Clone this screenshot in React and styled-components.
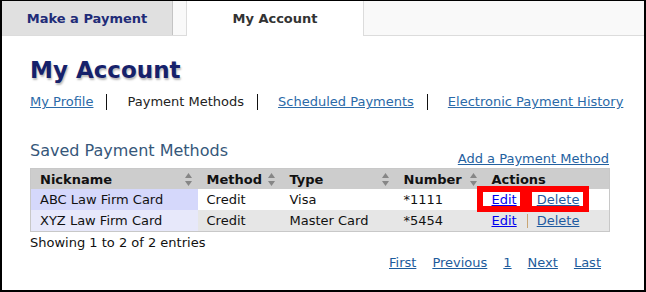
import React from 'react';
import styled, { createGlobalStyle } from 'styled-components';

const GlobalStyle = createGlobalStyle`
  body {
    margin: 0;
    font-family: "DejaVu Sans", Verdana, sans-serif;
    background: #fff;
  }
`;

const COLUMNS = [
  { key: 'nickname', label: 'Nickname', width: 167, sortable: true },
  { key: 'method', label: 'Method', width: 83, sortable: true },
  { key: 'type', label: 'Type', width: 114, sortable: true },
  { key: 'number', label: 'Number', width: 88, sortable: true },
  { key: 'actions', label: 'Actions', width: 127, sortable: false },
];

const ROWS = [
  { nickname: 'ABC Law Firm Card', method: 'Credit', type: 'Visa', number: '*1111', boxed: true },
  { nickname: 'XYZ Law Firm Card', method: 'Credit', type: 'Master Card', number: '*5454', boxed: false },
];

function SortIcon() {
  return (
    <svg width="7" height="13" viewBox="0 0 7 13">
      <path d="M3.5 0 L7 5 L0 5 Z" fill="#868686" />
      <path d="M0 8 L7 8 L3.5 13 Z" fill="#868686" />
    </svg>
  );
}

export default function App() {
  return (
    <>
      <GlobalStyle />
      <Frame>
        <TabBar>
          <Tab>Make a Payment</Tab>
          <Tab $active>My Account</Tab>
        </TabBar>
        <Content>
          <Title>My Account</Title>
          <SubNav>
            <SubNavItem><SubLink href="#">My Profile</SubLink></SubNavItem>
            <SubNavItem $sep>Payment Methods</SubNavItem>
            <SubNavItem $sep><SubLink href="#">Scheduled Payments</SubLink></SubNavItem>
            <SubNavItem $sep><SubLink href="#">Electronic Payment History</SubLink></SubNavItem>
          </SubNav>
          <Section>
            <SectionHead>
              <SectionTitle>Saved Payment Methods</SectionTitle>
              <AddLink href="#">Add a Payment Method</AddLink>
            </SectionHead>
            <Table>
              <colgroup>
                {COLUMNS.map((c) => (
                  <col key={c.key} style={{ width: c.width }} />
                ))}
              </colgroup>
              <thead>
                <tr>
                  {COLUMNS.map((c) => (
                    <Th key={c.key}>
                      <ThInner>
                        <span>{c.label}</span>
                        {c.sortable && <SortIcon />}
                      </ThInner>
                    </Th>
                  ))}
                </tr>
              </thead>
              <tbody>
                {ROWS.map((r, i) => (
                  <tr key={r.number}>
                    <Td $sorted $odd={i % 2 === 0}>{r.nickname}</Td>
                    <Td $odd={i % 2 === 0}>{r.method}</Td>
                    <Td $odd={i % 2 === 0}>{r.type}</Td>
                    <Td $odd={i % 2 === 0}>{r.number}</Td>
                    <Td $odd={i % 2 === 0}>
                      <Actions>
                        <Action $boxed={r.boxed} $edge="edit">
                          <EditLink href="#">Edit</EditLink>
                        </Action>
                        {!r.boxed && <Divider />}
                        <Action $boxed={r.boxed} $edge="delete" $gap={r.boxed ? 20 : 0}>
                          <DeleteLink href="#">Delete</DeleteLink>
                        </Action>
                      </Actions>
                    </Td>
                  </tr>
                ))}
              </tbody>
            </Table>
            <Info>Showing 1 to 2 of 2 entries</Info>
            <Pager>
              <PageLink href="#">First</PageLink>
              <PageLink href="#">Previous</PageLink>
              <PageLink href="#">1</PageLink>
              <PageLink href="#">Next</PageLink>
              <PageLink href="#">Last</PageLink>
            </Pager>
          </Section>
        </Content>
      </Frame>
    </>
  );
}

const Frame = styled.div`
  width: 646px;
  height: 292px;
  box-sizing: border-box;
  border: 2px solid #000;
  border-top-width: 1px;
  background: #fff;
  overflow: hidden;
`;

const TabBar = styled.div`
  display: flex;
  height: 34px;
  background: #f9f9f9;
  border-bottom: 1px solid #dcdcdc;
`;

const Tab = styled.div`
  display: flex;
  align-items: center;
  justify-content: center;
  font-size: 13px;
  font-weight: bold;
  ${(p) =>
    p.$active
      ? `
    width: 176px;
    height: 35px;
    margin-left: 13px;
    background: #fff;
    color: #333;
    border-left: 1px solid #dcdcdc;
    border-right: 1px solid #dcdcdc;
  `
      : `
    width: 170px;
    background: #e0e0e0;
    color: #1f2c78;
    border-right: 1px solid #c4c4c4;
  `}
`;

const Content = styled.div`
  padding-left: 28px;
`;

const Title = styled.h1`
  margin: 20px 0 0;
  font-size: 23px;
  line-height: 28px;
  font-weight: bold;
  color: #16216b;
  text-shadow: 1px 2px 2px rgba(0, 0, 0, 0.28);
`;

const SubNav = styled.ul`
  display: flex;
  margin: 10px 0 0;
  padding: 0;
  list-style: none;
  font-size: 13px;
  line-height: 16px;
  color: #222;
  white-space: nowrap;
`;

const SubNavItem = styled.li`
  ${(p) =>
    p.$sep &&
    `
    margin-left: 13px;
    padding-left: 20px;
    border-left: 1px solid #111;
  `}
`;

const SubLink = styled.a`
  color: #2b6aa8;
  text-decoration: underline;
`;

const Section = styled.div`
  width: 579px;
`;

const SectionHead = styled.div`
  display: flex;
  justify-content: space-between;
  align-items: flex-end;
  margin-top: 31px;
`;

const SectionTitle = styled.h2`
  margin: 0 0 7px;
  font-size: 16px;
  line-height: 20px;
  font-weight: normal;
  color: #36577a;
`;

const AddLink = styled.a`
  margin-bottom: 1px;
  font-size: 13px;
  line-height: 16px;
  color: #2461a0;
  text-decoration: underline;
`;

const Table = styled.table`
  width: 579px;
  border-collapse: collapse;
  table-layout: fixed;
  border: 1px solid #c8c8c8;
  font-size: 13px;
`;

const Th = styled.th`
  height: 20px;
  padding: 0 6px 0 9px;
  background: #cdcdcd;
  color: #111;
  text-align: left;
  font-weight: bold;
`;

const ThInner = styled.div`
  display: flex;
  align-items: center;
  justify-content: space-between;
`;

const Td = styled.td`
  height: 21px;
  padding: 0 9px;
  color: #111;
  white-space: nowrap;
  background: ${(p) =>
    p.$sorted ? (p.$odd ? '#d5d8fb' : '#e7e8fa') : p.$odd ? '#fff' : '#e6e6e6'};
`;

const Actions = styled.div`
  display: flex;
  align-items: center;
`;

const Action = styled.span`
  position: relative;
  display: inline-block;
  line-height: 16px;
  margin-left: ${(p) => p.$gap || 0}px;
  &::after {
    content: '';
    display: ${(p) => (p.$boxed ? 'block' : 'none')};
    position: absolute;
    top: -6px;
    bottom: -4px;
    left: ${(p) => (p.$edge === 'edit' ? '-15px' : '-11px')};
    right: ${(p) => (p.$edge === 'edit' ? '-9px' : '-10px')};
    border: 6px solid #ff0000;
    pointer-events: none;
  }
`;

const Divider = styled.span`
  width: 1px;
  height: 14px;
  margin: 0 9px 0 10px;
  background: #c9a574;
`;

const EditLink = styled.a`
  color: #0000ee;
  text-decoration: underline;
`;

const DeleteLink = styled.a`
  color: #1f5aa0;
  text-decoration: underline;
`;

const Info = styled.div`
  margin-top: 3px;
  font-size: 13px;
  line-height: 16px;
  color: #111;
`;

const Pager = styled.div`
  display: flex;
  justify-content: flex-end;
  gap: 16px;
  margin-top: 4px;
  padding-right: 8px;
  font-size: 13px;
  line-height: 16px;
`;

const PageLink = styled.a`
  color: #1d5b9c;
  text-decoration: underline;
`;
